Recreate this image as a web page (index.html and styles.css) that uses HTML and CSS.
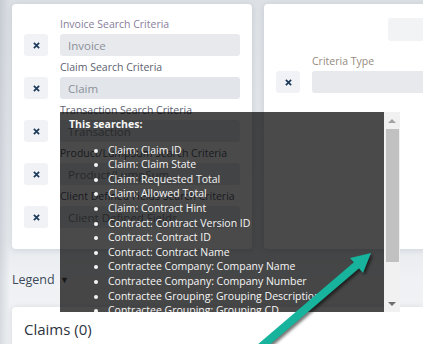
FILE: index.html
```html
<!DOCTYPE html>
<html lang="en">
<head>
    <meta charset="UTF-8">
    <meta name="viewport" content="width=device-width, initial-scale=1.0">
    <title>Claim Search</title>
    <link rel="stylesheet" href="styles.css">
</head>
<body>

    <div class="page">
        <div class="criteria-row">
            <section class="card criteria-card">
                <div class="criteria">
                    <label class="criteria-label label-invoice">Invoice Search Criteria</label>
                    <button class="clear-btn" type="button"><svg viewBox="0 0 8 8"><path d="M1 1L7 7M7 1L1 7"/></svg></button>
                    <input class="criteria-input" type="text" placeholder="Invoice">
                </div>
                <div class="criteria">
                    <label class="criteria-label">Claim Search Criteria</label>
                    <button class="clear-btn" type="button"><svg viewBox="0 0 8 8"><path d="M1 1L7 7M7 1L1 7"/></svg></button>
                    <input class="criteria-input input-dark" type="text" placeholder="Claim">
                </div>
                <div class="criteria">
                    <label class="criteria-label">Transaction Search Criteria</label>
                    <button class="clear-btn" type="button"><svg viewBox="0 0 8 8"><path d="M1 1L7 7M7 1L1 7"/></svg></button>
                    <input class="criteria-input" type="text" placeholder="Transaction">
                </div>
                <div class="criteria">
                    <label class="criteria-label">Product/LumpSum Search Criteria</label>
                    <button class="clear-btn" type="button"><svg viewBox="0 0 8 8"><path d="M1 1L7 7M7 1L1 7"/></svg></button>
                    <input class="criteria-input" type="text" placeholder="Product/LumpSum">
                </div>
                <div class="criteria">
                    <label class="criteria-label">Client Defined Fields Search Criteria</label>
                    <button class="clear-btn" type="button"><svg viewBox="0 0 8 8"><path d="M1 1L7 7M7 1L1 7"/></svg></button>
                    <input class="criteria-input" type="text" placeholder="Client Defined Fields">
                </div>
            </section>

            <section class="card criteria-card type-card">
                <div class="top-actions">
                    <button class="ghost-btn" type="button"></button>
                </div>
                <div class="criteria">
                    <label class="criteria-label label-type">Criteria Type</label>
                    <button class="clear-btn" type="button"><svg viewBox="0 0 8 8"><path d="M1 1L7 7M7 1L1 7"/></svg></button>
                    <input class="criteria-input" type="text">
                </div>
            </section>
        </div>

        <div class="legend">Legend <span class="caret">&#9660;</span></div>

        <section class="card results">
            <h2>Claims (0)</h2>
        </section>
    </div>

    <!-- tooltip shown over the claim search field -->
    <div class="tooltip">
        <div class="tooltip-body">
            <div class="tooltip-title">This searches:</div>
            <ul>
                <li>Claim: Claim ID</li>
                <li>Claim: Claim State</li>
                <li>Claim: Requested Total</li>
                <li>Claim: Allowed Total</li>
                <li>Claim: Contract Hint</li>
                <li>Contract: Contract Version ID</li>
                <li>Contract: Contract ID</li>
                <li>Contract: Contract Name</li>
                <li>Contractee Company: Company Name</li>
                <li>Contractee Company: Company Number</li>
                <li>Contractee Grouping: Grouping Description</li>
                <li>Contractee Grouping: Grouping CD</li>
                <li>Contractee Grouping: Grouping Name</li>
            </ul>
        </div>
        <div class="scrollbar">
            <span class="scroll-up"></span>
            <span class="scroll-thumb"></span>
            <span class="scroll-track"></span>
            <span class="scroll-down"></span>
        </div>
    </div>

    <svg class="pointer-arrow" width="423" height="344" viewBox="0 0 423 344">
        <path class="arrow-shaft" d="M255 352L358 264"/>
        <polygon class="arrow-head" points="371,253 350,258 363,273"/>
    </svg>

</body>
</html>
```

FILE: styles.css
```css
html, body {
    margin: 0;
    padding: 0;
    overflow: hidden;
}

body {
    width: 423px;
    height: 344px;
    position: relative;
    font-family: "Open Sans", "Noto Sans", sans-serif;
    background:
        linear-gradient(to right, rgba(60, 70, 90, 0.14) 0, rgba(60, 70, 90, 0) 10px),
        linear-gradient(to bottom, #dde1e6 0, #e8ebef 240px, #eff1f4 280px, #f1f3f5 100%);
}

.page {
    padding: 4px 0 0 12px;
}

.criteria-row {
    display: flex;
    gap: 12px;
    height: 245px;
}

.card {
    background-color: #ffffff;
    border-radius: 4px;
    box-shadow: 0 1px 6px rgba(40, 55, 80, 0.14);
}

.criteria-card {
    width: 240px;
    flex-shrink: 0;
    box-sizing: border-box;
    padding: 13px 12px 0 12px;
}

.criteria {
    display: grid;
    grid-template-columns: 24px 180px;
    column-gap: 12px;
    row-gap: 3px;
    margin-bottom: 4px;
}

.criteria-label {
    grid-column: 2;
    font-size: 10.5px;
    line-height: 14px;
    color: #5b6170;
    white-space: nowrap;
}

.label-invoice {
    color: #877e9b;
}

.label-type {
    color: #968a7e;
}

.clear-btn {
    width: 24px;
    height: 22px;
    padding: 0;
    border: none;
    border-radius: 3px;
    background-color: #f0f2f5;
    display: flex;
    align-items: center;
    justify-content: center;
}

.clear-btn svg {
    width: 7px;
    height: 7px;
}

.clear-btn path {
    stroke: #1f3b5c;
    stroke-width: 2;
    fill: none;
}

.criteria-input {
    height: 22px;
    box-sizing: border-box;
    border: none;
    border-radius: 3px;
    background-color: #e7e9ed;
    padding: 0 8px;
    font-family: inherit;
    font-size: 11.5px;
    color: #444;
}

.criteria-input::placeholder {
    color: #8b9099;
}

.input-dark {
    background-color: #e2e5ea;
}

.type-card {
    padding-top: 14px;
}

.top-actions {
    display: flex;
    justify-content: flex-end;
    margin-bottom: 13px;
}

.ghost-btn {
    width: 104px;
    height: 23px;
    border: none;
    border-radius: 3px;
    background-color: #f1f3f5;
}

.legend {
    padding: 22px 0 18px 0;
    font-size: 12.5px;
    line-height: 18px;
    color: #3c4a5a;
}

.caret {
    font-size: 9px;
    color: #555;
    margin-left: 2px;
    vertical-align: 1px;
}

.results {
    padding: 12px;
    height: 60px;
    border-radius: 4px 0 0 0;
}

.results h2 {
    margin: 0;
    font-size: 15px;
    line-height: 20px;
    font-weight: normal;
    color: #2d3440;
}

/* tooltip */
.tooltip {
    position: absolute;
    left: 60px;
    top: 112px;
    width: 340px;
    height: 200px;
    display: flex;
}

.tooltip-body {
    flex: 1;
    overflow: hidden;
    background-color: rgba(0, 0, 0, 0.71);
    color: #f6f6f6;
    padding: 5px 9px 0 9px;
    font-size: 10.5px;
    line-height: 14.6px;
    white-space: nowrap;
}

.tooltip-title {
    font-weight: bold;
}

.tooltip-body ul {
    margin: 11px 0 0 0;
    padding-left: 39px;
}

.scrollbar {
    width: 16px;
    display: flex;
    flex-direction: column;
    background-color: #f1f1f1;
}

.scroll-up,
.scroll-down {
    height: 17px;
    display: flex;
    align-items: center;
    justify-content: center;
}

.scroll-up::before {
    content: "";
    border-left: 4px solid transparent;
    border-right: 4px solid transparent;
    border-bottom: 4px solid #a3a3a3;
}

.scroll-down::before {
    content: "";
    border-left: 4px solid transparent;
    border-right: 4px solid transparent;
    border-top: 4px solid #6e6e6e;
}

.scroll-thumb {
    height: 133px;
    margin: 0 1px 0 2px;
    background-color: #c1c1c1;
}

.scroll-track {
    flex: 1;
}

/* annotation arrow */
.pointer-arrow {
    position: absolute;
    left: 0;
    top: 0;
    pointer-events: none;
    filter: drop-shadow(2px 2px 1.5px rgba(0, 0, 0, 0.55));
}

.arrow-shaft {
    stroke: #17b39d;
    stroke-width: 8;
    fill: none;
}

.arrow-head {
    fill: #17b39d;
}
```
